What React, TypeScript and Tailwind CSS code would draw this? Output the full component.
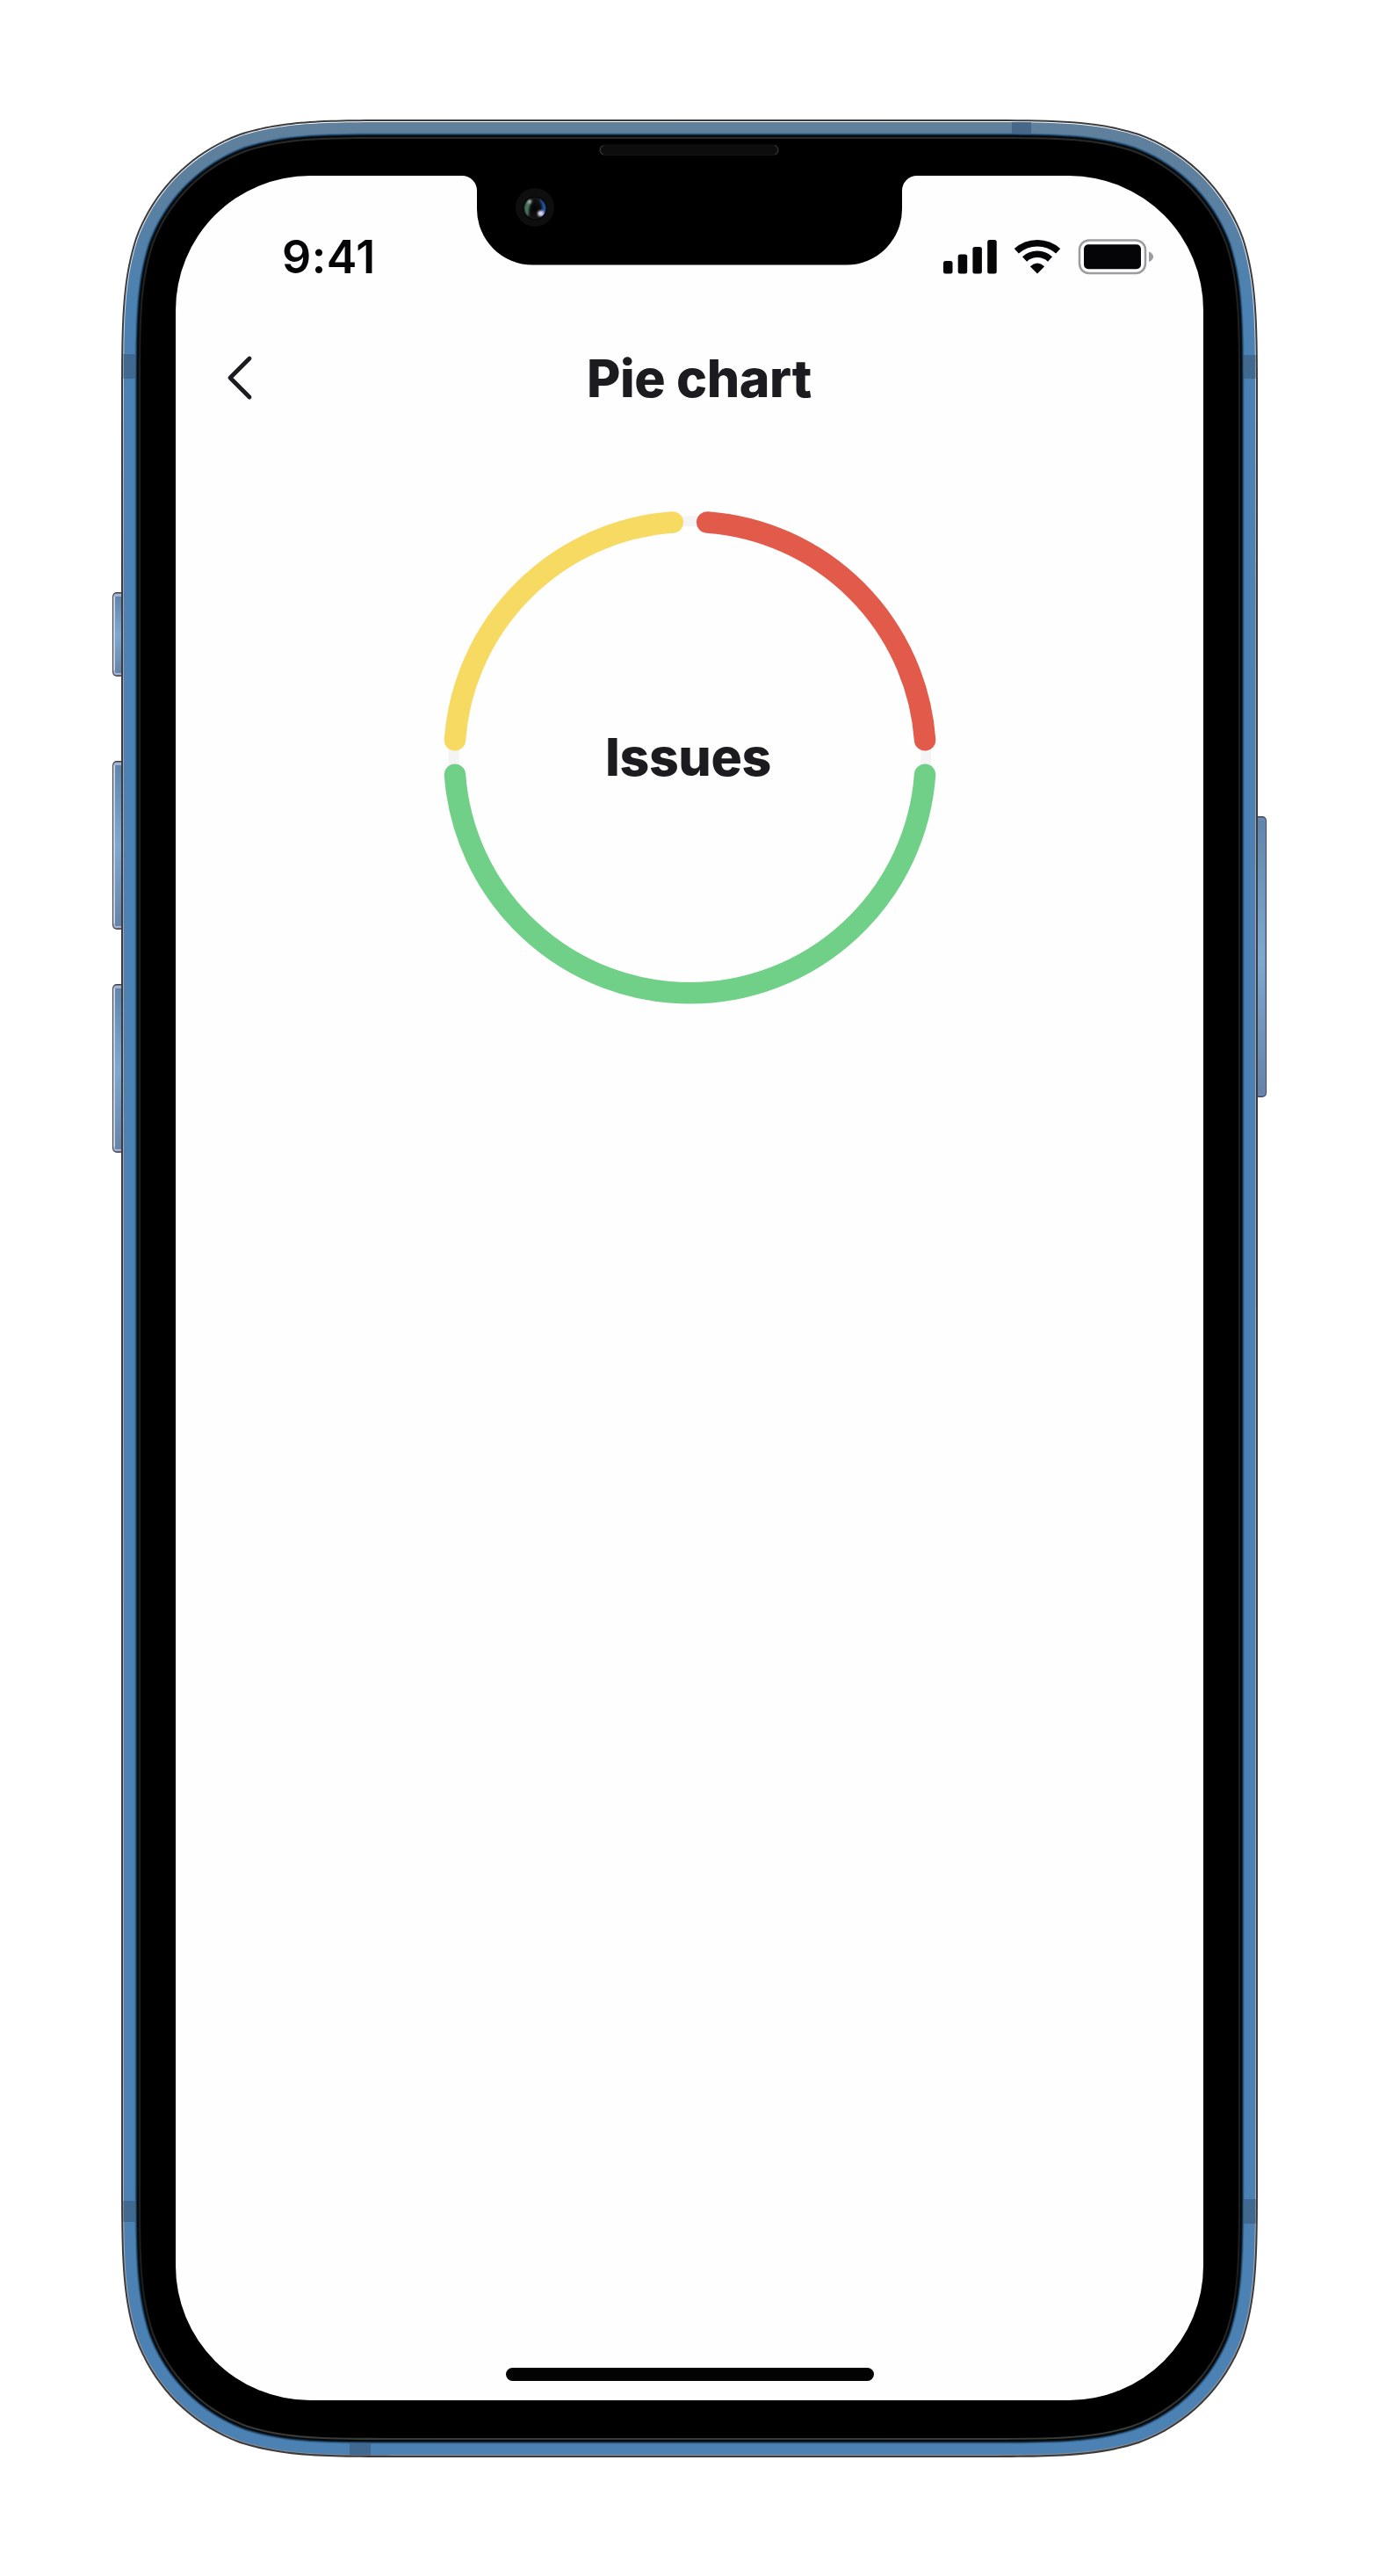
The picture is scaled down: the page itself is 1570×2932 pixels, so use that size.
import React from "react";

const RAD = Math.PI / 180;

/* Rectangle with continuous (superelliptic) corners. */
function shell(x: number, y: number, w: number, h: number, r: number): string {
  const a = 1.52866483 * r;
  const b = 1.08849296 * r;
  const c = 0.86840694 * r;
  const d = 0.63149379 * r;
  const e = 0.07491139 * r;
  const f = 0.37282383 * r;
  const g = 0.16905956 * r;
  const X = x + w;
  const Y = y + h;
  return [
    `M${x + a} ${y}L${X - a} ${y}`,
    `C${X - b} ${y} ${X - c} ${y} ${X - d} ${y + e}`,
    `C${X - f} ${y + g} ${X - g} ${y + f} ${X - e} ${y + d}`,
    `C${X} ${y + c} ${X} ${y + b} ${X} ${y + a}`,
    `L${X} ${Y - a}`,
    `C${X} ${Y - b} ${X} ${Y - c} ${X - e} ${Y - d}`,
    `C${X - g} ${Y - f} ${X - f} ${Y - g} ${X - d} ${Y - e}`,
    `C${X - c} ${Y} ${X - b} ${Y} ${X - a} ${Y}`,
    `L${x + a} ${Y}`,
    `C${x + b} ${Y} ${x + c} ${Y} ${x + d} ${Y - e}`,
    `C${x + f} ${Y - g} ${x + g} ${Y - f} ${x + e} ${Y - d}`,
    `C${x} ${Y - c} ${x} ${Y - b} ${x} ${Y - a}`,
    `L${x} ${y + a}`,
    `C${x} ${y + b} ${x} ${y + c} ${x + e} ${y + d}`,
    `C${x + g} ${y + f} ${x + f} ${y + g} ${x + d} ${y + e}`,
    `C${x + c} ${y} ${x + b} ${y} ${x + a} ${y}Z`,
  ].join("");
}

const inset = (n: number) => shell(138 + n, 136 + n, 1294 - 2 * n, 2661 - 2 * n, 214 - n);

const SIDE_BUTTONS = [
  { x: 128, y: 674, h: 96, left: true },
  { x: 128, y: 866, h: 192, left: true },
  { x: 128, y: 1120, h: 192, left: true },
  { x: 1428, y: 929, h: 320, left: false },
];

const ANTENNAS = [
  [140.5, 403, 16, 28],
  [1414, 404, 15.5, 27],
  [140.5, 2505, 16, 24],
  [1414, 2503, 15.5, 28],
  [1152, 139, 22, 16],
  [398, 2779, 24, 15.5],
];

function DeviceFrame() {
  return (
    <svg className="pointer-events-none absolute inset-0" width="1570" height="2932" viewBox="0 0 1570 2932" aria-hidden="true">
      <defs>
        <linearGradient id="metal" x1="0" y1="136" x2="0" y2="2797" gradientUnits="userSpaceOnUse">
          <stop offset="0" stopColor="#60809c" />
          <stop offset="0.03" stopColor="#5c809f" />
          <stop offset="0.08" stopColor="#4b82b3" />
          <stop offset="1" stopColor="#4b82b3" />
        </linearGradient>
        <linearGradient id="rim" x1="0" y1="136" x2="0" y2="2797" gradientUnits="userSpaceOnUse">
          <stop offset="0" stopColor="#ffffff" />
          <stop offset="0.08" stopColor="#d5dbe2" />
          <stop offset="0.2" stopColor="#a8a4b2" />
          <stop offset="0.9" stopColor="#b4b0b8" />
          <stop offset="1" stopColor="#8f8f92" />
        </linearGradient>
        <linearGradient id="edge" x1="0" y1="136" x2="0" y2="2797" gradientUnits="userSpaceOnUse">
          <stop offset="0" stopColor="#2a2c2c" />
          <stop offset="0.1" stopColor="#1b1e1f" />
          <stop offset="0.93" stopColor="#1b1e1f" />
          <stop offset="1" stopColor="#3e3e3e" />
        </linearGradient>
        <linearGradient id="key" x1="0" y1="0" x2="0" y2="1">
          <stop offset="0" stopColor="#5f86ad" />
          <stop offset="0.5" stopColor="#7da9d1" />
          <stop offset="1" stopColor="#6583a8" />
        </linearGradient>
        <radialGradient id="lens" cx="0.5" cy="0.5" r="0.5">
          <stop offset="0" stopColor="#020202" />
          <stop offset="0.35" stopColor="#0a0a0a" />
          <stop offset="1" stopColor="#161616" />
        </radialGradient>
        <filter id="soft" x="-50%" y="-50%" width="200%" height="200%">
          <feGaussianBlur stdDeviation="0.9" />
        </filter>
        <clipPath id="lensClip">
          <circle cx="609" cy="237" r="12.5" />
        </clipPath>
      </defs>
      {SIDE_BUTTONS.map((b) => (
        <g key={b.y}>
          <rect x={b.x} y={b.y} width="14" height={b.h} rx="5" fill={b.left ? "#3d3d48" : "#3f4a66"} />
          <rect x={b.x + 1} y={b.y + 1.5} width="12" height={b.h - 3} rx="4" fill={b.left ? "#a9b3d0" : "#6d88b0"} />
          <rect x={b.left ? b.x + 3 : b.x} y={b.y + 5} width={b.left ? 11 : 12} height={b.h - 9} rx="1" fill="url(#key)" />
          {b.left && <rect x={b.x + 1.2} y={b.y + 5} width="1.6" height={b.h - 12} fill="#d2d6df" />}
        </g>
      ))}
      <path d={inset(0)} fill="#3b3b3d" />
      <path d={inset(2)} fill="url(#rim)" />
      <path d={inset(3)} fill="url(#metal)" />
      {ANTENNAS.map(([x, y, w, h]) => (
        <rect key={`${x}-${y}`} x={x} y={y} width={w} height={h} fill="#3d5f82" fillOpacity="0.75" />
      ))}
      <path d={inset(15.5)} fill="#396a96" />
      <path d={inset(16.5)} fill="#1f415f" />
      <path d={inset(17.5)} fill="#0a1620" />
      <path d={inset(18.5)} fill="#050708" />
      <path d={inset(20)} fill="url(#edge)" />
      <path d={inset(22)} fill="#000000" />
      <rect x="200" y="200" width="1170" height="2532" rx="153" fill="#fefefe" />
      <path
        fill="#000000"
        d="M526 199V200A17 17 0 0 1 543 217V238A63.500 63.500 0 0 0 606.500 301.500H963.500A63.500 63.500 0 0 0 1027 238V217A17 17 0 0 1 1044 200V199Z"
      />
      <rect x="682.500" y="165" width="204" height="11.500" rx="5.750" fill="#0d0d0d" stroke="#141414" strokeWidth="1" />
      <path d="M687 165.500a5.500 5.500 0 0 0 0 10.500M882 165.500a5.500 5.500 0 0 1 0 10.500" fill="none" stroke="#3c3c3c" strokeWidth="1" />
      <circle cx="609" cy="236" r="22" fill="#0e0e0f" />
      <circle cx="609" cy="237" r="13.500" fill="#020202" />
      <circle cx="609" cy="237" r="12.500" fill="url(#lens)" />
      <g clipPath="url(#lensClip)" filter="url(#soft)">
        <path d="M602 227C596 231 595 242 602 247C602 241 602 234 606 228Z" fill="#4a7561" />
        <path d="M613 226C624 229 625 243 618 247L616 242C619 237 617 231 613 226Z" fill="#1b56a0" />
        <circle cx="603" cy="229.500" r="2.200" fill="#a9b8b0" />
        <circle cx="615.500" cy="243" r="3.300" fill="#d9d7f0" />
      </g>
    </svg>
  );
}

function StatusBar() {
  return (
    <div className="flex h-[156px] items-start justify-between pt-[65px] pr-[56px] pl-[121px]">
      <span className="text-[52px] leading-[56px] font-semibold tracking-[0.5px] text-[#050507]">9:41</span>
      <svg className="mt-[6px]" width="244" height="44" viewBox="1070 271 244 44" aria-hidden="true">
        <g fill="#050507">
          <rect x="1074" y="297" width="10.500" height="14.500" rx="2.500" />
          <rect x="1090.700" y="289.500" width="10.500" height="22" rx="2.500" />
          <rect x="1107.400" y="281" width="10.500" height="30.500" rx="2.500" />
          <rect x="1124.200" y="273" width="10.500" height="38.500" rx="2.500" />
          <path d="M1181 311.500L1172.800 303.200Q1181 295.800 1189.200 303.200Z" />
        </g>
        <g fill="none" stroke="#050507">
          <path d="M1157.300 285.700A35.500 35.500 0 0 1 1204.700 285.700" strokeWidth="7.500" />
          <path d="M1166.500 295A21.500 21.500 0 0 1 1195.500 295" strokeWidth="7.500" />
        </g>
        <rect x="1229" y="273.500" width="75" height="37.500" rx="11" fill="none" stroke="#9c9c9e" strokeWidth="2.500" />
        <rect x="1234" y="278.300" width="65" height="28" rx="5" fill="#050507" />
        <path d="M1308 286.500Q1313 288.500 1313 292.300T1308 298Z" fill="#9c9c9e" />
      </svg>
    </div>
  );
}

const CX = 281;
const R = 268.3;
const GAP = 4.2;

const SEGMENTS = [
  { color: "#e25a4a", from: 0, to: 90 },
  { color: "#71d087", from: 90, to: 270 },
  { color: "#f7da62", from: 270, to: 360 },
];

function arc(from: number, to: number): string {
  const p = (deg: number) => `${CX + R * Math.sin(deg * RAD)} ${CX - R * Math.cos(deg * RAD)}`;
  return `M${p(from + GAP)}A${R} ${R} 0 0 1 ${p(to - GAP)}`;
}

function PieChart() {
  return (
    <div className="mx-auto mt-[77px] grid size-[562px] place-items-center">
      <svg className="col-start-1 row-start-1" width="562" height="562" viewBox="-0.5 0 562 562" fill="none" aria-hidden="true">
        <circle cx={CX} cy={CX} r={R + 0.5} stroke="#f4f4f5" strokeWidth="12" />
        {SEGMENTS.map((s) => (
          <path key={s.color} d={arc(s.from, s.to)} stroke={s.color} strokeWidth="24.500" strokeLinecap="round" />
        ))}
      </svg>
      <span className="col-start-1 row-start-1 mr-[3px] text-[59px] leading-[72px] font-extrabold tracking-[-0.400px] text-[#1c1b1f]">
        Issues
      </span>
    </div>
  );
}

export default function App() {
  return (
    <div className="relative h-[2932px] w-[1570px] overflow-hidden bg-white p-[200px] font-['Inter',sans-serif]">
      <DeviceFrame />
      <main className="relative flex h-[2532px] w-[1170px] flex-col">
        <StatusBar />
        <header className="flex h-[148px] items-center pl-[57px]">
          <svg width="32" height="52" viewBox="257 404 32 52" fill="none" aria-hidden="true">
            <path d="M284 408L262 430L284 452" stroke="#1c1b1f" strokeWidth="4.800" strokeLinecap="round" strokeLinejoin="round" />
          </svg>
          <h1 className="ml-[379px] pt-[2px] text-[59px] leading-[72px] font-extrabold tracking-[-0.400px] whitespace-nowrap text-[#1c1b1f]">
            Pie chart
          </h1>
        </header>
        <PieChart />
        <div className="mx-auto mt-auto mb-[22px] h-[15.500px] w-[419px] rounded-full bg-[#020203]" />
      </main>
    </div>
  );
}
